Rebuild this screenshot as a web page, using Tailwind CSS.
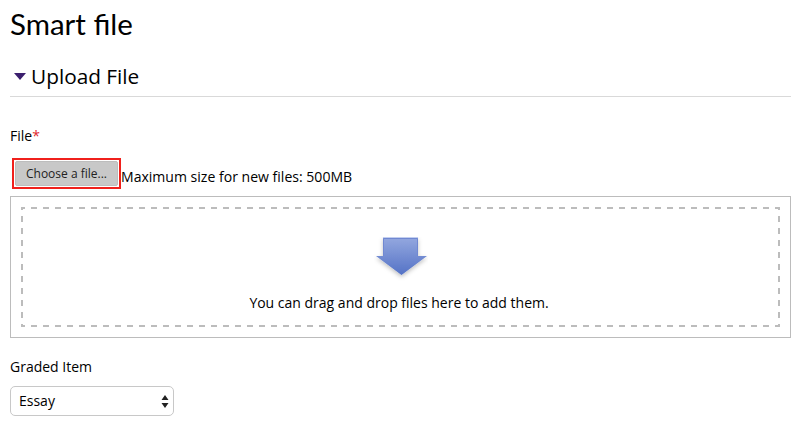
<!DOCTYPE html>
<html lang="en">
<head>
    <meta charset="UTF-8">
    <title>Smart file</title>
    <script src="https://cdn.jsdelivr.net/npm/@tailwindcss/browser@4"></script>
</head>
<body class="bg-white text-[14px] text-[#1a1a1a] font-['Open_Sans',sans-serif] overflow-hidden">
    <div class="w-[801px] h-[427px] pl-[10px] pr-[10px]">
        <!-- Title -->
        <h1 class="h-[50px] pt-[5px] text-[29.5px] leading-[38px] font-['Lato',sans-serif] text-black">Smart file</h1>

        <!-- Section header -->
        <div class="h-[47px] border-b border-[#d9d9d9] flex items-start pt-[11px]">
            <svg class="mt-[12px] ml-[4px] mr-[5px]" width="12" height="7" viewBox="0 0 12 7"><path d="M0 0H12L6 7Z" fill="#3b1f6e"/></svg>
            <span class="text-[20.8px] leading-[30px] text-black">Upload File</span>
        </div>

        <!-- File field -->
        <div class="mt-[29px] h-[20px] leading-[20px] text-black">File<span class="text-[#e0262b]">*</span></div>
        <div class="mt-[12px] h-[31px] flex items-end">
            <div class="ml-[2px] w-[109px] h-[31px] border-2 border-[#f0201c] p-[1px]">
                <button class="w-full h-full bg-[#c8c8c8] border border-[#bdbdbd] rounded-[2px] text-[12px] text-[#222] flex items-center justify-center">Choose a file...</button>
            </div>
            <span class="mb-[2px] text-[14.05px] leading-[20px] text-black">Maximum size for new files: 500MB</span>
        </div>

        <!-- Drop area -->
        <div class="mt-[7px] h-[142px] border border-[#bcbcbc] p-[10px]">
            <div class="relative h-full flex flex-col items-center pt-[30px]">
                <!-- dashes are 6 on / 6 off, css dashed can't do that -->
                <svg class="absolute inset-0" width="759" height="120" viewBox="0 0 759 120" fill="none" stroke="#bcbcbc" stroke-width="2" stroke-dasharray="6 6">
                    <path d="M0 1H759" stroke-dashoffset="2"/>
                    <path d="M0 119H759" stroke-dashoffset="2"/>
                    <path d="M1 0V120" stroke-dashoffset="3"/>
                    <path d="M758 0V120" stroke-dashoffset="3"/>
                </svg>
                <svg width="54" height="44" viewBox="0 0 54 44" class="ml-[1px]">
                    <defs>
                        <linearGradient id="arrowFill" x1="0" y1="0" x2="0" y2="1">
                            <stop offset="0" stop-color="#94a8df"/>
                            <stop offset="1" stop-color="#5472c6"/>
                        </linearGradient>
                        <filter id="arrowShadow" x="-20%" y="-20%" width="140%" height="150%">
                            <feDropShadow dx="0" dy="2" stdDeviation="2" flood-color="#000" flood-opacity="0.25"/>
                        </filter>
                    </defs>
                    <path d="M9 .5H44V19H53L27.5 38L2 19H9Z" fill="url(#arrowFill)" filter="url(#arrowShadow)"/>
                    <path d="M9.5 19V1.5H43.5V19" stroke="#7088d2" stroke-width="1" fill="none"/>
                    <path d="M9 .5H44" stroke="#c3cff0" stroke-width="1" fill="none"/>
                </svg>
                <p class="mt-[12px] mr-[3px] text-[14px] leading-[20px] text-black">You can drag and drop files here to add them.</p>
            </div>
        </div>

        <!-- Graded item -->
        <div class="mt-[19px] h-[20px] leading-[20px] text-black">Graded Item</div>
        <div class="mt-[9px] w-[164px] h-[30px] border border-[#c8c8c8] rounded-[5px] flex items-center justify-between pl-[8px] pr-[4px]">
            <span class="mb-[2px] text-[14px] text-black">Essay</span>
            <svg width="8" height="13" viewBox="0 0 8 13"><path d="M4 0L7.5 5H.5ZM4 13L.5 8H7.5Z" fill="#222"/></svg>
        </div>
    </div>
</body>
</html>
